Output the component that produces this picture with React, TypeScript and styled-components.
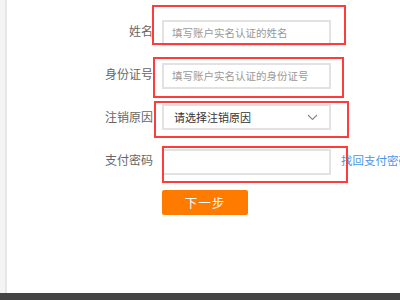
import React, { useState } from "react";
import styled, { createGlobalStyle } from "styled-components";

const GlobalStyle = createGlobalStyle`
  html, body {
    margin: 0;
    padding: 0;
    background: #fff;
  }
  body {
    font-family: "Noto Sans CJK SC", "Noto Sans", "Liberation Sans", sans-serif;
  }
`;

type Mark = { $top: number; $left: number; $right: number; $bottom: number };

const rows = [
  {
    label: "姓名",
    placeholder: "填写账户实名认证的姓名",
    mark: { $top: -13, $left: -10, $right: -15, $bottom: -1 },
  },
  {
    label: "身份证号",
    placeholder: "填写账户实名认证的身份证号",
    mark: { $top: -4, $left: -9, $right: -13, $bottom: -11 },
  },
];

const CancelAccount = () => {
  const [name, setName] = useState("");
  const [idNo, setIdNo] = useState("");
  const [pwd, setPwd] = useState("");
  const values = [name, idNo];
  const setters = [setName, setIdNo];

  return (
    <>
      <GlobalStyle />
      <Page>
        <Body>
          <Side />
          <Main>
            <Form onSubmit={(e) => e.preventDefault()}>
              {rows.map((row, i) => (
                <React.Fragment key={row.label}>
                  <Label>{row.label}</Label>
                  <Field>
                    <TextInput
                      type="text"
                      placeholder={row.placeholder}
                      value={values[i]}
                      onChange={(e) => setters[i](e.target.value)}
                    />
                    <Highlight {...row.mark} />
                  </Field>
                  <span />
                </React.Fragment>
              ))}

              <Label>注销原因</Label>
              <Field>
                <Select type="button">
                  请选择注销原因
                  <svg width="11" height="7" viewBox="0 0 11 7" fill="none">
                    <path d="M1 1l4.5 4.5L10 1" stroke="#888" strokeWidth="1.1" />
                  </svg>
                </Select>
                <Highlight $top={-3} $left={-8} $right={-18} $bottom={-8} />
              </Field>
              <span />

              <Label>支付密码</Label>
              <Field>
                <TextInput
                  type="password"
                  value={pwd}
                  onChange={(e) => setPwd(e.target.value)}
                />
                <Highlight $top={-1} $left={0} $right={-17} $bottom={-10} />
              </Field>
              <Link href="#">找回支付密码</Link>

              <span />
              <Submit type="submit">下一步</Submit>
              <span />
            </Form>
          </Main>
        </Body>
        <Footer />
      </Page>
    </>
  );
};

const Page = styled.div`
  display: flex;
  flex-direction: column;
  height: 100vh;
  overflow: hidden;
`;
const Body = styled.div`
  flex: 1;
  display: flex;
  min-height: 0;
`;
const Side = styled.div`
  width: 5px;
  background: #f4f4f4;
  border-right: 2px solid #e6e6e6;
`;
const Main = styled.div`
  flex: 1;
  padding-top: 18px;
  overflow: hidden;
`;
const Form = styled.form`
  display: grid;
  grid-template-columns: 146px 169px auto;
  column-gap: 9px;
  row-gap: 17px;
  align-items: center;
`;
const Label = styled.label`
  text-align: right;
  font-size: 12px;
  line-height: 26px;
  color: #666;
  white-space: nowrap;
`;
const Field = styled.div`
  position: relative;
  height: 26px;
`;
const TextInput = styled.input`
  box-sizing: border-box;
  width: 100%;
  height: 26px;
  padding: 0 8px;
  border: 2px solid #e2e2e2;
  border-radius: 0;
  outline: none;
  font-family: inherit;
  font-size: 10.5px;
  color: #333;
  &::placeholder {
    color: #999;
  }
`;
const Select = styled.button`
  box-sizing: border-box;
  display: flex;
  align-items: center;
  justify-content: space-between;
  width: 100%;
  height: 26px;
  padding: 0 11px 0 10px;
  border: 2px solid #e2e2e2;
  background: #fff;
  font-family: inherit;
  font-size: 11px;
  color: #333;
  cursor: pointer;
`;
const Highlight = styled.div<Mark>`
  position: absolute;
  top: ${(p) => p.$top}px;
  left: ${(p) => p.$left}px;
  right: ${(p) => p.$right}px;
  bottom: ${(p) => p.$bottom}px;
  border: 2px solid #ff3c3c;
  pointer-events: none;
`;
const Link = styled.a`
  margin-left: 1px;
  font-size: 11.5px;
  color: #4a95ec;
  text-decoration: none;
  white-space: nowrap;
`;
const Submit = styled.button`
  width: 86px;
  height: 25px;
  border: none;
  border-radius: 2px;
  background: #ff7b00;
  color: #fff;
  font-family: inherit;
  font-size: 12.5px;
  letter-spacing: 1px;
  cursor: pointer;
`;
const Footer = styled.div`
  height: 7px;
  background: #444;
`;

export default CancelAccount;
